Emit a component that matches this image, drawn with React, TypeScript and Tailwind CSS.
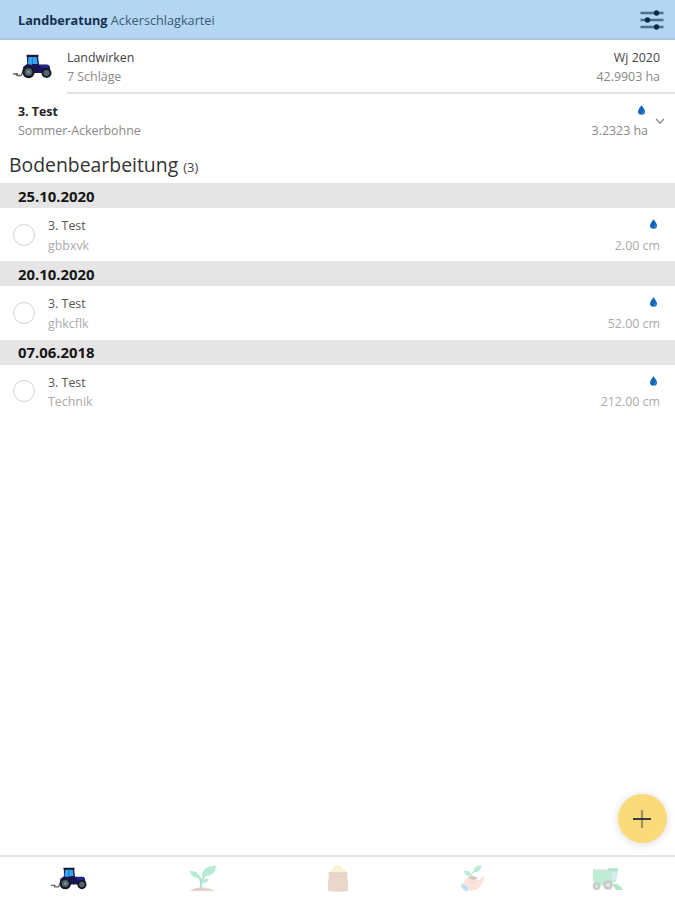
import React from "react";

interface Entry {
  date: string;
  field: string;
  note: string;
  depth: string;
}

const ENTRIES: Entry[] = [
  { date: "25.10.2020", field: "3. Test", note: "gbbxvk", depth: "2.00 cm" },
  { date: "20.10.2020", field: "3. Test", note: "ghkcflk", depth: "52.00 cm" },
  { date: "07.06.2018", field: "3. Test", note: "Technik", depth: "212.00 cm" },
];

function TractorIcon({ className }: { className?: string }) {
  return (
    <svg viewBox="0 0 39 26" className={className}>
      <path d="M0 20h3l1 1.500h4l2-4M3 19.500l2 .5" fill="none" stroke="#666" strokeWidth="1.300" />
      <path d="M14 2h11l1 8.500h8q3 .5 3 3.500v5H11l-1-6 4-3z" fill="#17145c" />
      <path d="M13.500 .8h12v2h-12z" fill="#15182d" />
      <path d="M15.500 3h8.200l.8 7-5 1-5-1z" fill="#36a3ec" />
      <path d="M19.500 3v7" stroke="#1f6fc0" strokeWidth=".8" />
      <path d="M19 10h7l-3 8h-5z" fill="#171650" />
      <path d="M27 11h7l2 3-8-.5z" fill="#292693" />
      <circle cx="15.500" cy="18" r="6.200" fill="#171a25" />
      <circle cx="15.500" cy="18" r="3.800" fill="#52666c" />
      <circle cx="15.500" cy="18" r="1.400" fill="#87979a" />
      <circle cx="33.500" cy="19" r="5" fill="#171a25" />
      <circle cx="33.500" cy="19" r="3" fill="#52666c" />
    </svg>
  );
}

function SproutIcon() {
  return (
    <svg viewBox="0 0 28 28" className="h-7 w-7">
      <path d="M2 25q4-3 11-2.500T24 25v1H2z" fill="#e5d1c8" />
      <path d="M11.800 24Q13 17 10 11M12 19q1-7 7-11" fill="none" stroke="#a9dfca" strokeWidth="1.800" />
      <path d="M13 11Q13 1 27 .5 27 12 13 11z" fill="#b8ebd6" />
      <path d="M11 13Q3 14 .5 6q9-1 10.500 7z" fill="#b8ebd6" />
      <path d="M12 18q1-5 8-4-2 5-8 4z" fill="#b8ebd6" />
    </svg>
  );
}

function SackIcon() {
  return (
    <svg viewBox="0 0 24 28" className="h-7 w-6">
      <path d="M4 8q0-3 3-4 2-4 5-4t5 4q3 1 3 4z" fill="#faf4d2" />
      <path d="M2.500 7h19v3q-1 1 0 2 1 7 .3 14-10 1.500-19.600 0-.7-7 .3-14 1-1 0-2z" fill="#e9d7cb" />
      <path d="M3 9h18M3 11.500h18" stroke="#e2cdc0" strokeWidth=".8" />
    </svg>
  );
}

function HandPlantIcon() {
  return (
    <svg viewBox="0 0 26 28" className="h-7 w-[26px]">
      <path d="M11 12Q11 8 17 5" fill="none" stroke="#b2ead3" strokeWidth="1.200" />
      <path d="M13 7q1-6 8-7 1 8-8 7z" fill="#b8ebd5" />
      <path d="M11 11Q5 12 4 6q7-1 7 5z" fill="#b8ebd5" />
      <path d="M7 13q5-4 11 0l-3 2H9z" fill="#d8c7bd" />
      <path d="M3 20q1-6 5-7 3 2 7 2l4 0 4-4 2 1-4 9-5 4-9 1z" fill="#fce3dc" />
      <path d="M9 16q3 3 8 1" fill="none" stroke="#f8d8d0" />
      <path d="M2 18l7 5-3 4-5-5z" fill="#bde2f5" />
    </svg>
  );
}

function HarvesterIcon() {
  return (
    <svg viewBox="0 0 31 24" className="mt-0.5 h-6 w-[31px]">
      <path d="M1 4h15V1.500h10l-2 13-8 4H3Q0 15 1 4z" fill="#c0ecd6" />
      <path d="M1 3h15" stroke="#ccd9d3" strokeWidth="1.300" />
      <path d="M16 1.500h10v2H16z" fill="#a9e0c4" />
      <path d="M20 5h4.500l-1 8H20z" fill="#d5eef3" />
      <path d="M20 17h5l4 3 2 3h-7z" fill="#b2e6cb" />
      <circle cx="16" cy="18" r="4.800" fill="#c6cac9" />
      <circle cx="16" cy="18" r="2.300" fill="#dfe2e1" />
      <circle cx="4.500" cy="19.300" r="3.800" fill="#c6cac9" />
      <circle cx="4.500" cy="19.300" r="1.800" fill="#dfe2e1" />
    </svg>
  );
}

function DropIcon() {
  return (
    <svg viewBox="0 0 8 11" className="h-2.5 w-[7px]">
      <path d="M4 0Q8 5 8 7.200A4 3.800 0 0 1 0 7.200Q0 5 4 0z" fill="#1268b8" />
      <path d="M6.500 7q0 2-2 2.500" fill="none" stroke="#69aae0" strokeWidth=".8" />
    </svg>
  );
}

function SlidersIcon() {
  return (
    <svg viewBox="0 0 24 20" className="mt-[3px] h-5 w-6">
      <path d="M.5 3h23M.5 10h23M.5 17h23" stroke="#4d7190" strokeWidth="2.400" />
      <g fill="#0b2b4a">
        <circle cx="16.500" cy="3" r="2.700" />
        <circle cx="7.500" cy="10" r="2.700" />
        <circle cx="16.500" cy="17" r="2.700" />
      </g>
    </svg>
  );
}

function EntryRow({ entry }: { entry: Entry }) {
  return (
    <section className="h-[78.250px]">
      <h2 className="flex h-[25px] items-center bg-[#e5e5e5] pt-px pl-[18px] text-[14.900px] font-bold text-[#151515]">
        {entry.date}
      </h2>
      <div className="flex pt-2 pr-[15px] pl-[13px] leading-[19.500px]">
        <div className="mt-[7.500px] h-[22px] w-[22px] rounded-full border border-[#d2d2d2]" />
        <div className="ml-[13px] flex-1">
          <div className="text-[#555]">{entry.field}</div>
          <div className="text-[#aaa]">{entry.note}</div>
        </div>
        <div className="flex flex-col items-end text-[#aaa]">
          <div className="flex h-[19.500px] items-start pt-[3px] pr-[3px]">
            <DropIcon />
          </div>
          <div>{entry.depth}</div>
        </div>
      </div>
    </section>
  );
}

export default function App() {
  return (
    <div className="flex h-screen flex-col overflow-hidden bg-white font-['Open_Sans',sans-serif] text-[12.400px]">
      <header className="flex h-[39.500px] shrink-0 items-center justify-between border-b-2 border-[#a9c5dc] bg-[#b4d6f2] pr-[11px] pl-[18px]">
        <div className="pt-[3px] text-[12.700px] text-[#3c5a78]">
          <span className="font-bold text-[#14304f]">Landberatung</span> Ackerschlagkartei
        </div>
        <SlidersIcon />
      </header>

      <div className="flex h-[54px] shrink-0 pl-[13px] leading-[19px]">
        <TractorIcon className="mt-[14px] h-[26px] w-[39px]" />
        <div className="ml-[15px] flex flex-1 justify-between border-b-2 border-[#e2e2e2] pt-2 pr-[15px]">
          <div>
            <div className="text-[#444]">Landwirken</div>
            <div className="text-[#888]">7 Schläge</div>
          </div>
          <div className="text-right">
            <div className="text-[#444]">Wj 2020</div>
            <div className="text-[#888]">42.9903 ha</div>
          </div>
        </div>
      </div>

      <div className="flex h-[54px] shrink-0 pt-2 pr-[10px] pl-[18px] leading-[19.500px]">
        <div className="flex-1">
          <div className="font-bold text-[#222]">3. Test</div>
          <div className="text-[#888]">Sommer-Ackerbohne</div>
        </div>
        <div className="flex flex-col items-end text-[#888]">
          <div className="flex h-[19.500px] items-start pt-[3px] pr-[3px]">
            <DropIcon />
          </div>
          <div>3.2323 ha</div>
        </div>
        <svg viewBox="0 0 10 6" className="mt-4 ml-[7px] h-1.5 w-2.5">
          <path d="M1 1l4 4 4-4" fill="none" stroke="#888" strokeWidth="1.300" />
        </svg>
      </div>

      <h1 className="flex h-[35.500px] shrink-0 items-baseline pl-[9px] text-[19.400px] leading-[33px] text-[#333]">
        Bodenbearbeitung<span className="ml-[5px] text-[13px] text-[#444]">(3)</span>
      </h1>

      <main className="relative flex-1">
        {ENTRIES.map((entry) => (
          <EntryRow key={entry.date} entry={entry} />
        ))}
        <button className="absolute right-2 bottom-3 flex h-[49px] w-[49px] items-center justify-center rounded-full bg-[#fbdb79] shadow-[0_1px_8px_rgba(0,0,0,0.15)]">
          <svg viewBox="0 0 18 18" className="mr-px h-[18px] w-[18px]">
            <path d="M9 0v18" stroke="#a1905c" strokeWidth="2.200" />
            <path d="M0 9h18" stroke="#12213c" strokeWidth="1.700" />
          </svg>
        </button>
      </main>

      <nav className="grid h-[45px] shrink-0 grid-cols-5 justify-items-center border-t-2 border-[#e4e4e4] pt-2">
        <TractorIcon className="mt-0.5 ml-0.5 h-6 w-9" />
        <SproutIcon />
        <SackIcon />
        <HandPlantIcon />
        <HarvesterIcon />
      </nav>
    </div>
  );
}
